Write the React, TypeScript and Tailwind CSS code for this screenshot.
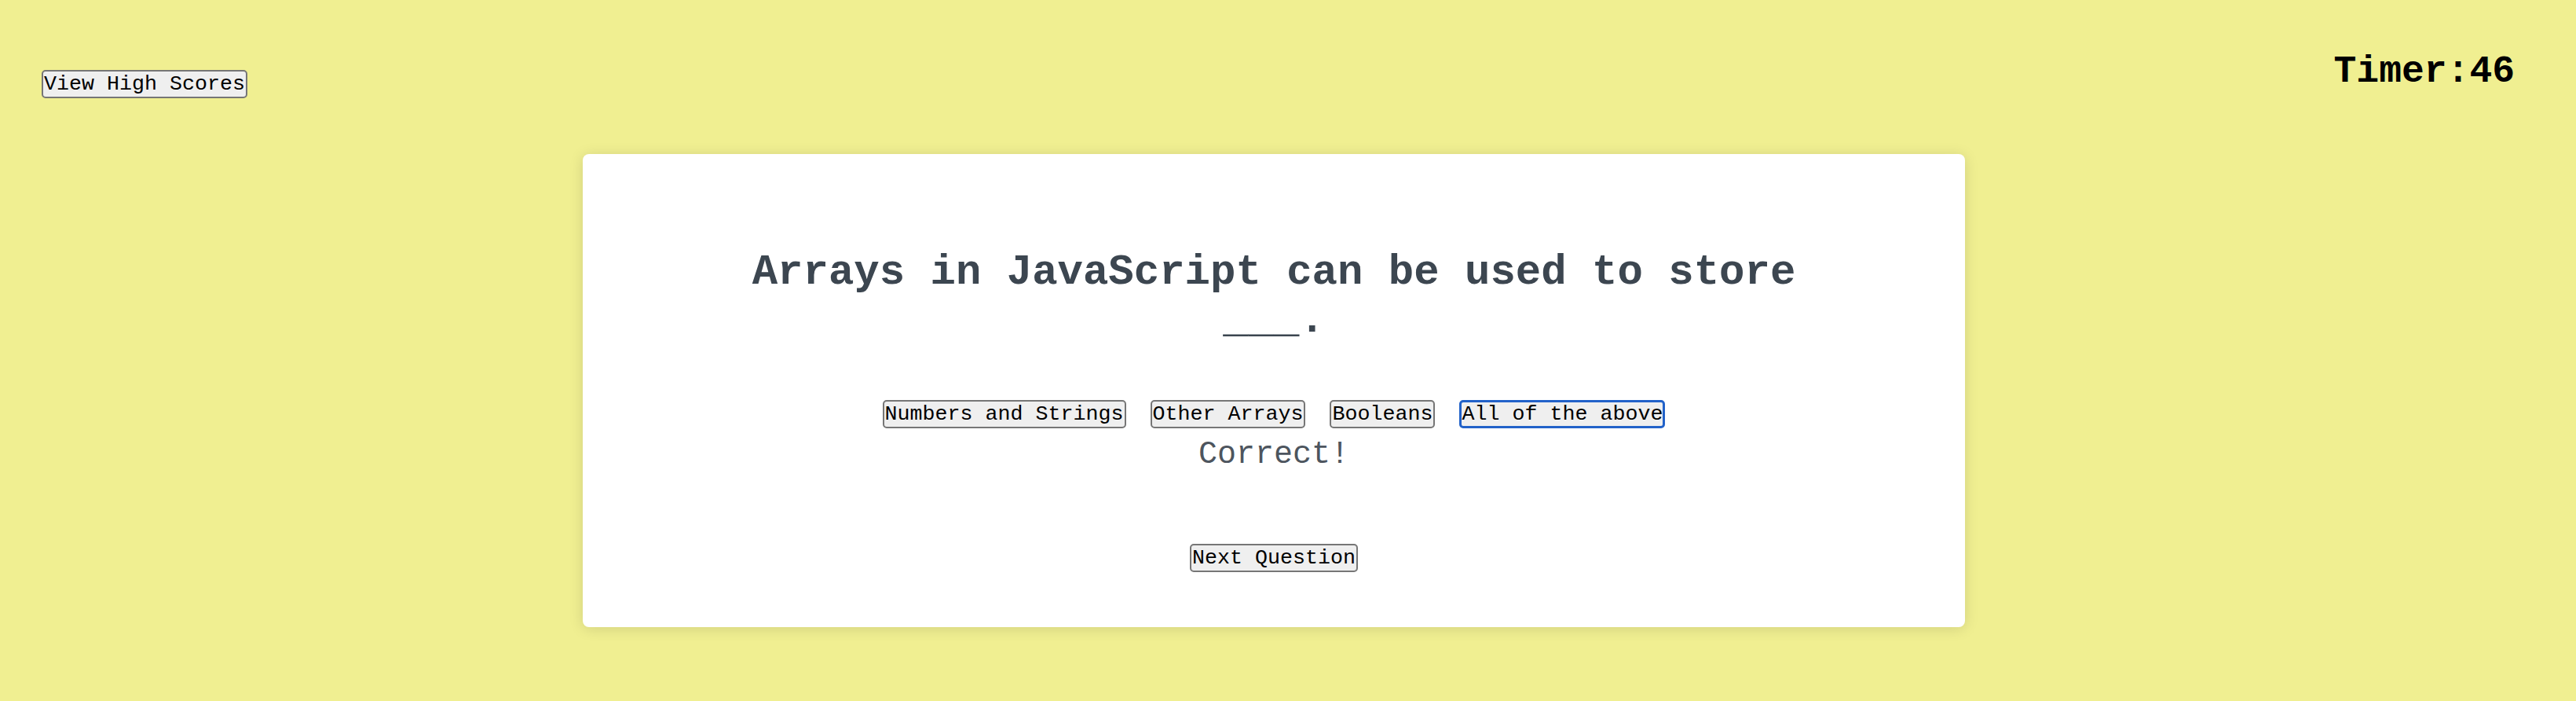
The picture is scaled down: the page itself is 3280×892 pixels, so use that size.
import React from "react";

const font = "font-['Courier_New','Nimbus_Mono_PS','FreeMono','Liberation_Mono',monospace]";

const btn =
  "border-2 border-[#767676] rounded-[5px] bg-[#efefef] px-[1px] py-[1px] text-[26.67px] leading-[normal] text-black whitespace-nowrap";

export default function App() {
  const answers = ["Numbers and Strings", "Other Arrays", "Booleans"];
  return (
    <div className={`min-h-[892px] w-full bg-[#f0ef91] ${font} overflow-hidden`}>
      <header className="flex items-start justify-between">
        <button className={`${btn} ${font} mt-[89px] ml-[53px]`}>View High Scores</button>
        <div className="mt-[64px] mr-[78px] text-[48px] font-bold leading-[normal] text-black">
          Timer:46
        </div>
      </header>
      <main className="ml-[742px] mt-[71px] flex h-[602px] w-[1760px] flex-col items-center rounded-[8px] bg-white pt-[120px] shadow-[0_2px_18px_rgba(0,0,0,0.13)]">
        <h1 className="w-[1400px] text-center text-[54px] font-bold leading-[normal] text-[#3c4650]">
          Arrays in JavaScript can be used to store ___.
        </h1>
        <div className="mt-[71px] flex gap-[31px]">
          {answers.map((a) => (
            <button key={a} className={`${btn} ${font}`}>
              {a}
            </button>
          ))}
          <button className={`rounded-[5px] border-[3px] border-[#2262c9] bg-[#efefef] px-0 py-0 text-[26.67px] leading-[normal] text-black whitespace-nowrap ${font}`}>
            All of the above
          </button>
        </div>
        <p className="mt-[11px] text-[40px] leading-[normal] text-[#4d555e]">Correct!</p>
        <button className={`${btn} ${font} mt-[91px]`}>Next Question</button>
      </main>
    </div>
  );
}
